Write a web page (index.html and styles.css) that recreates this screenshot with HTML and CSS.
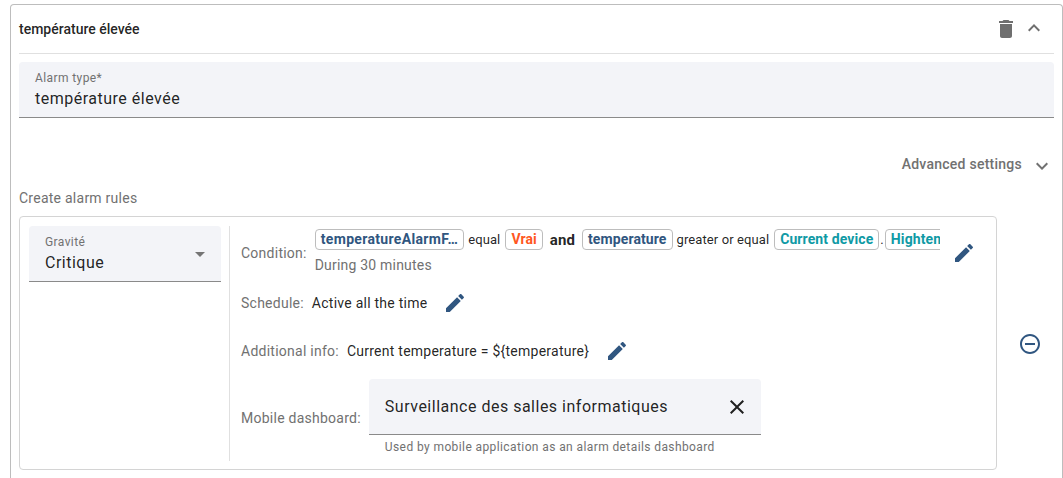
FILE: index.html
```html
<!DOCTYPE html>
<html lang="en">

<head>
    <meta charset="UTF-8" />
    <title>Alarm rule</title>
    <link rel="stylesheet" href="styles.css">
</head>

<body>
    <div class="panel">
        <div class="panel-header">
            <span class="panel-title">température élevée</span>
            <svg class="icon-delete" viewBox="0 0 24 24"><path d="M6 19c0 1.1.9 2 2 2h8c1.1 0 2-.9 2-2V7H6v12zM19 4h-3.500l-1-1h-5l-1 1H5v2h14V4z" /></svg>
            <svg class="icon-chevron" viewBox="0 0 24 24"><path d="M7.410 15.410 12 10.830l4.590 4.580L18 14l-6-6-6 6z" /></svg>
        </div>

        <div class="field type-field">
            <label>Alarm type*</label>
            <div class="field-value">température élevée</div>
        </div>

        <div class="advanced">
            <span>Advanced settings</span>
            <svg class="icon-chevron" viewBox="0 0 24 24"><path d="M7.410 8.590 12 13.170l4.590-4.580L18 10l-6 6-6-6z" /></svg>
        </div>

        <div class="rules-title">Create alarm rules</div>

        <div class="rule-row">
            <div class="rule-card">
                <div class="field severity">
                    <label>Gravité</label>
                    <div class="field-value">Critique</div>
                    <span class="arrow"></span>
                </div>

                <div class="rule-details">
                    <div class="detail condition">
                        <span class="detail-label">Condition:</span>
                        <div class="condition-body">
                            <div class="condition-line">
                                <span class="tag tag-key tag-long">temperatureAlarmF…</span>
                                <span class="op">equal</span>
                                <span class="tag tag-false">Vrai</span>
                                <b class="and">and</b>
                                <span class="tag tag-key">temperature</span>
                                <span class="op">greater or equal</span>
                                <span class="tag tag-source">Current device</span>
                                <span class="dot">.</span>
                                <span class="tag tag-source">Hightemp</span>
                            </div>
                            <div class="during">During 30 minutes</div>
                        </div>
                        <svg class="icon-edit" viewBox="0 0 24 24"><path d="M3 17.250V21h3.750L17.810 9.940l-3.750-3.750L3 17.250zM20.710 7.040c.39-.39.39-1.020 0-1.410l-2.340-2.340c-.39-.39-1.020-.39-1.410 0l-1.830 1.830 3.750 3.750 1.830-1.830z" /></svg>
                    </div>

                    <div class="detail schedule">
                        <span class="detail-label">Schedule:</span>
                        <span class="detail-value">Active all the time</span>
                        <svg class="icon-edit" viewBox="0 0 24 24"><path d="M3 17.250V21h3.750L17.810 9.940l-3.750-3.750L3 17.250zM20.710 7.040c.39-.39.39-1.020 0-1.410l-2.340-2.340c-.39-.39-1.020-.39-1.410 0l-1.830 1.830 3.750 3.750 1.830-1.830z" /></svg>
                    </div>

                    <div class="detail info">
                        <span class="detail-label">Additional info:</span>
                        <span class="detail-value">Current temperature = ${temperature}</span>
                        <svg class="icon-edit" viewBox="0 0 24 24"><path d="M3 17.250V21h3.750L17.810 9.940l-3.750-3.750L3 17.250zM20.710 7.040c.39-.39.39-1.020 0-1.410l-2.340-2.340c-.39-.39-1.020-.39-1.410 0l-1.830 1.830 3.750 3.750 1.830-1.830z" /></svg>
                    </div>

                    <div class="detail mobile">
                        <span class="detail-label">Mobile dashboard:</span>
                        <div class="mobile-field">
                            <div class="mobile-input">
                                <span>Surveillance des salles informatiques</span>
                                <svg class="icon-close" viewBox="0 0 24 24"><path d="M19 6.410 17.590 5 12 10.590 6.410 5 5 6.410 10.590 12 5 17.590 6.410 19 12 13.410 17.590 19 19 17.590 13.410 12z" /></svg>
                            </div>
                            <div class="hint">Used by mobile application as an alarm details dashboard</div>
                        </div>
                    </div>
                </div>
            </div>

            <div class="remove-col">
                <svg class="icon-remove" viewBox="0 0 24 24"><path d="M7 11v2h10v-2H7zm5-9C6.480 2 2 6.480 2 12s4.480 10 10 10 10-4.480 10-10S17.520 2 12 2zm0 18c-4.410 0-8-3.590-8-8s3.590-8 8-8 8 3.590 8 8-3.590 8-8 8z" /></svg>
            </div>
        </div>
    </div>
</body>

</html>
```

FILE: styles.css
```css
* {
    box-sizing: border-box;
}

html,
body {
    height: 478px;
    overflow: hidden;
}

body {
    margin: 0;
    background: white;
    font-family: Roboto, "Liberation Sans", sans-serif;
    font-size: 14px;
    color: rgba(0, 0, 0, 0.87);
}

svg {
    display: block;
    flex: none;
    fill: currentColor;
}

.panel {
    margin: 4px 0 0 10px;
    width: 1053px;
    height: 474px;
    padding: 0 8px;
    border: 1px solid #bdbdbd;
    border-bottom: none;
    border-radius: 4px 4px 0 0;
}

.panel-header {
    display: flex;
    align-items: center;
    height: 49px;
    border-bottom: 1px solid #e0e0e0;
    color: #6f6f6f;
}

.panel-title {
    flex: 1;
    font-size: 14px;
    font-weight: 500;
    color: rgba(0, 0, 0, 0.87);
}

.icon-delete {
    width: 24px;
    height: 24px;
    margin-right: 4px;
}

.icon-chevron {
    width: 24px;
    height: 24px;
}

.panel-header .icon-chevron {
    margin: 0 8px 2px 0;
}

.field {
    position: relative;
    background: #f3f4f8;
    border-bottom: 1px solid #8a8a8a;
    border-radius: 4px 4px 0 0;
}

.field label {
    display: block;
    font-size: 12px;
    line-height: 14px;
    letter-spacing: 0.4px;
    color: #717171;
}

.field-value {
    font-size: 16px;
    line-height: 20px;
    letter-spacing: 0.5px;
}

.type-field {
    height: 56px;
    margin-top: 8px;
    padding: 9px 16px 0;
}

.type-field .field-value {
    margin-top: 4px;
}

.advanced {
    display: flex;
    justify-content: flex-end;
    align-items: center;
    gap: 8px;
    height: 24px;
    margin-top: 34px;
    font-weight: 500;
    letter-spacing: 0.25px;
    color: #717171;
}

.advanced .icon-chevron {
    margin-top: 4px;
}

.rules-title {
    margin-top: 12px;
    line-height: 20px;
    letter-spacing: 0.25px;
    color: #717171;
}

.rule-row {
    display: flex;
    margin-top: 8px;
}

.rule-card {
    display: flex;
    width: 978px;
    height: 254px;
    padding: 9px 9px 8px;
    border: 1px solid #d4d4d4;
    border-radius: 4px;
}

.severity {
    flex: none;
    width: 192px;
    height: 56px;
    padding: 9px 16px 0;
}

.severity .field-value {
    margin-top: 4px;
}

.arrow {
    position: absolute;
    top: 26px;
    right: 16px;
    border-left: 5px solid transparent;
    border-right: 5px solid transparent;
    border-top: 5px solid #757575;
}

.rule-details {
    flex: 1;
    min-width: 0;
    margin-left: 8px;
    padding-left: 11px;
    border-left: 1px solid #e0e0e0;
}

.detail {
    display: flex;
    align-items: center;
}

.detail-label {
    flex: none;
    letter-spacing: 0.25px;
    color: #717171;
}

.detail-value {
    margin-left: 8px;
    font-size: 14px;
    letter-spacing: 0.25px;
}

.condition {
    height: 51px;
    margin-top: 1px;
}

.condition-body {
    align-self: flex-start;
    width: 625px;
    margin-left: 8px;
    padding-top: 2px;
    overflow: hidden;
}

.condition-line {
    display: flex;
    align-items: center;
    white-space: nowrap;
    height: 21px;
    font-size: 13px;
    letter-spacing: 0.1px;
}

.tag {
    flex: none;
    padding: 0 5px;
    height: 21px;
    line-height: 19px;
    border: 1px solid #bdbdbd;
    border-radius: 4px;
    font-size: 14px;
    font-weight: 700;
}

.tag-long {
    letter-spacing: 0.33px;
}

.tag-key {
    color: #305680;
}

.tag-false {
    color: #ff5722;
}

.tag-source {
    color: #0f9aa5;
}

.op {
    margin: 0 5px 0 4px;
}

.and {
    margin: 0 7px;
    font-size: 15px;
}

.dot {
    margin: 0 1px;
}

.during {
    margin-top: 5px;
    line-height: 20px;
    letter-spacing: 0.2px;
    color: #717171;
}

.icon-edit {
    width: 24px;
    height: 24px;
    color: #305680;
}

.condition .icon-edit {
    margin-left: 12px;
}

.schedule {
    height: 24px;
    margin-top: 13px;
}

.schedule .icon-edit {
    margin-left: 16px;
}

.info {
    height: 24px;
    margin-top: 24px;
}

.info .icon-edit {
    margin-left: 16px;
}

.mobile {
    margin-top: 16px;
}

.mobile .detail-label {
    margin-top: 2px;
}

.mobile-field {
    width: 392px;
    margin-left: 8px;
}

.mobile-input {
    display: flex;
    justify-content: space-between;
    align-items: center;
    height: 56px;
    padding: 0 12px 0 16px;
    background: #f3f4f8;
    border-bottom: 1px solid #8a8a8a;
    border-radius: 4px 4px 0 0;
    font-size: 16px;
    letter-spacing: 0.5px;
}

.icon-close {
    width: 24px;
    height: 24px;
}

.hint {
    padding: 5px 16px 0;
    font-size: 12px;
    line-height: 14px;
    letter-spacing: 0.4px;
    color: #717171;
}

.remove-col {
    flex: 1;
    display: flex;
    align-items: center;
    justify-content: center;
    height: 254px;
    padding: 2px 0 0 9px;
    color: #305680;
}

.icon-remove {
    width: 24px;
    height: 24px;
}
```
